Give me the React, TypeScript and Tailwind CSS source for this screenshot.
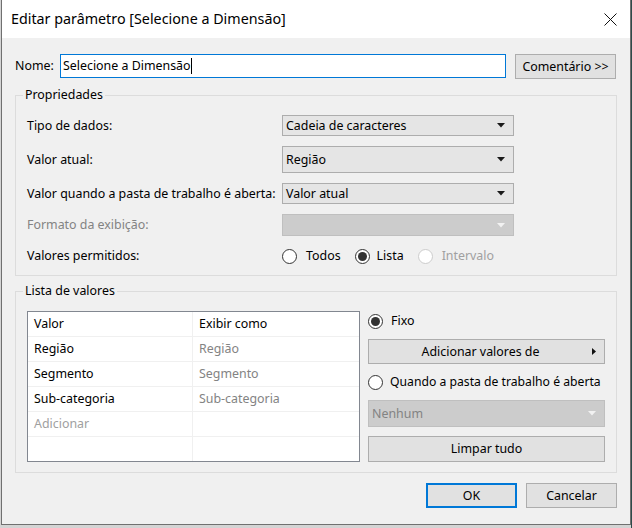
import React from 'react';

const font = "font-['Noto_Sans',sans-serif]";

function Caret({ disabled }: { disabled?: boolean }) {
    return (
        <svg width="8" height="5" viewBox="0 0 8 5" className="shrink-0">
            <path d="M0 0h8L4 4.5z" fill={disabled ? '#f2f2f2' : '#1a1a1a'} />
        </svg>
    );
}

function Combo({ value, h, disabled }: { value?: string; h: string; disabled?: boolean }) {
    return (
        <div
            className={`flex w-[232px] items-center justify-between border pl-[3px] pr-[8px] ${h} ${
                disabled ? 'border-[#bfbfbf] bg-[#cccccc] text-[#838383]' : 'border-[#adadad] bg-[#e5e5e5] text-black'
            }`}
        >
            <span>{value}</span>
            <Caret disabled={disabled} />
        </div>
    );
}

function Radio({ checked, disabled }: { checked?: boolean; disabled?: boolean }) {
    return (
        <span
            className={`flex h-[15px] w-[15px] shrink-0 items-center justify-center rounded-full border bg-white ${
                disabled ? 'border-[#cccccc]' : 'border-[#333333]'
            }`}
        >
            {checked && <span className="h-[9px] w-[9px] rounded-full bg-[#333333]" />}
        </span>
    );
}

function Row({ label, children, h, disabled }: { label: string; children: React.ReactNode; h: string; disabled?: boolean }) {
    return (
        <div className={`flex items-center ${h}`}>
            <div className={`w-[255px] ${disabled ? 'text-[#838383]' : 'text-black'}`}>{label}</div>
            {children}
        </div>
    );
}

const rows: [string, string][] = [
    ['Região', 'Região'],
    ['Segmento', 'Segmento'],
    ['Sub-categoria', 'Sub-categoria'],
];

export default function App() {
    return (
        <div className={`flex h-[528px] w-[632px] bg-[#d4d4d4] text-[12.4px] leading-[16px] ${font}`}>
            <div className="ml-px flex h-[525px] w-[630px] shrink-0 flex-col border-x border-b border-[#707070] bg-[#f0f0f0]">
                {/* title bar */}
                <div className="flex h-[38px] items-center justify-between bg-white pl-[9px] pr-[13px]">
                    <span className="text-[14.3px] text-black">Editar parâmetro [Selecione a Dimensão]</span>
                    <svg width="13" height="13" viewBox="0 0 13 13">
                        <path d="M0.5 0.5l12 12M12.5 0.5l-12 12" stroke="#111" strokeWidth="1" />
                    </svg>
                </div>

                <div className="flex flex-col px-[13px] pt-[16px]">
                    {/* name */}
                    <div className="flex items-start">
                        <span className="mt-[4px] w-[45px] text-black">Nome:</span>
                        <div className="flex h-[24px] w-[446px] items-center border border-[#0078d7] bg-white pl-[2px]">
                            <span className="text-black">Selecione a Dimensão</span>
                            <span className="h-[16px] w-px bg-black" />
                        </div>
                        <button className="ml-[9px] h-[25px] w-[101px] border border-[#adadad] bg-[#e1e1e1] text-black">
                            Comentário &gt;&gt;
                        </button>
                    </div>

                    {/* propriedades */}
                    <fieldset className="mt-[8px] border border-[#dcdcdc] pb-[9px]">
                        <legend className="ml-[7px] px-[2px] text-black">Propriedades</legend>
                        <div className="flex flex-col gap-[10px] pl-[11px] pt-[12px]">
                            <Row label="Tipo de dados:" h="h-[21px]">
                                <Combo value="Cadeia de caracteres" h="h-[21px]" />
                            </Row>
                            <Row label="Valor atual:" h="h-[27px]">
                                <Combo value="Região" h="h-[27px]" />
                            </Row>
                            <Row label="Valor quando a pasta de trabalho é aberta:" h="h-[21px]">
                                <Combo value="Valor atual" h="h-[21px]" />
                            </Row>
                            <Row label="Formato da exibição:" h="h-[22px]" disabled>
                                <Combo h="h-[22px]" disabled />
                            </Row>
                            <Row label="Valores permitidos:" h="h-[20px]">
                                <div className="flex items-center">
                                    <Radio />
                                    <span className="ml-[9px] text-black">Todos</span>
                                    <span className="ml-[14px]">
                                        <Radio checked />
                                    </span>
                                    <span className="ml-[7px] text-black">Lista</span>
                                    <span className="ml-[14px]">
                                        <Radio disabled />
                                    </span>
                                    <span className="ml-[9px] text-[#a0a0a0]">Intervalo</span>
                                </div>
                            </Row>
                        </div>
                    </fieldset>

                    {/* lista de valores */}
                    <fieldset className="mt-[7px] border border-[#dcdcdc] pb-[10px]">
                        <legend className="ml-[7px] px-[2px] text-black">Lista de valores</legend>
                        <div className="flex px-[11px] pt-[12px]">
                            <div className="flex w-[333px] shrink-0 flex-col border border-[#828790] bg-white">
                                <div className="grid h-[25px] grid-cols-[165px_1fr] border-b border-[#f0f0f0]">
                                    <div className="flex items-center border-r border-[#f0f0f0] pl-[6px] text-black">Valor</div>
                                    <div className="flex items-center pl-[6px] text-black">Exibir como</div>
                                </div>
                                {rows.map(([v, d]) => (
                                    <div key={v} className="grid h-[25px] grid-cols-[165px_1fr] border-b border-[#f0f0f0]">
                                        <div className="flex items-center border-r border-[#f0f0f0] pl-[6px] text-black">{v}</div>
                                        <div className="flex items-center pl-[6px] text-[#838383]">{d}</div>
                                    </div>
                                ))}
                                <div className="grid h-[25px] grid-cols-[165px_1fr] border-b border-[#f0f0f0]">
                                    <div className="flex items-center border-r border-[#f0f0f0] pl-[6px] text-[#a0a0a0]">Adicionar</div>
                                    <div />
                                </div>
                                <div className="grid h-[24px] grid-cols-[165px_1fr]">
                                    <div className="border-r border-[#f0f0f0]" />
                                    <div />
                                </div>
                            </div>

                            <div className="ml-[8px] flex min-w-0 flex-1 flex-col">
                                <div className="flex h-[20px] items-center">
                                    <Radio checked />
                                    <span className="ml-[8px] text-black">Fixo</span>
                                </div>
                                <button className="mt-[8px] flex h-[25px] items-center border border-[#adadad] bg-[#e1e1e1] pr-[8px] text-black">
                                    <span className="flex-1 text-center">Adicionar valores de</span>
                                    <svg width="4" height="7" viewBox="0 0 4 7">
                                        <path d="M0 0l4 3.5L0 7z" fill="#111" />
                                    </svg>
                                </button>
                                <div className="mt-[8px] flex h-[20px] items-center whitespace-nowrap">
                                    <Radio />
                                    <span className="ml-[7px] text-[12.2px] text-black">Quando a pasta de trabalho é aberta</span>
                                </div>
                                <div className="mt-[8px] flex h-[27px] items-center justify-between border border-[#bfbfbf] bg-[#cccccc] pl-[3px] pr-[8px] text-[#838383]">
                                    <span>Nenhum</span>
                                    <Caret disabled />
                                </div>
                                <button className="mt-[9px] h-[26px] border border-[#adadad] bg-[#e1e1e1] text-black">Limpar tudo</button>
                            </div>
                        </div>
                    </fieldset>

                    {/* footer */}
                    <div className="mt-[10px] flex justify-end gap-[9px]">
                        <button className="h-[25px] w-[91px] border-2 border-[#0078d7] bg-[#e1e1e1] text-black">OK</button>
                        <button className="h-[25px] w-[91px] border border-[#adadad] bg-[#e1e1e1] text-black">Cancelar</button>
                    </div>
                </div>
            </div>
            <div className="flex-1 bg-[#2f4a4a]" />
        </div>
    );
}
